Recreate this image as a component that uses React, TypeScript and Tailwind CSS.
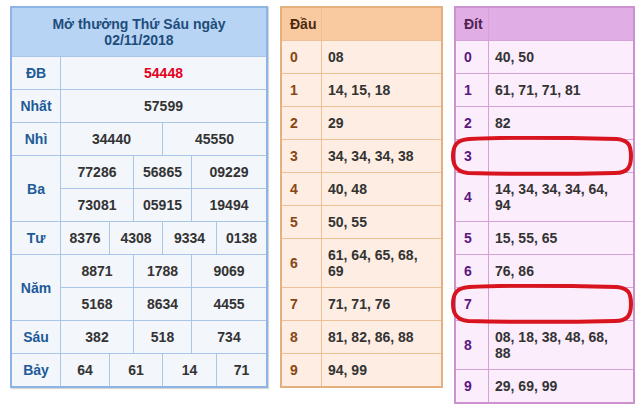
import React from 'react';

const font = { fontFamily: '"Liberation Sans", Arial, sans-serif' };

const dau: [string, string][] = [
  ['0', '08'],
  ['1', '14, 15, 18'],
  ['2', '29'],
  ['3', '34, 34, 34, 38'],
  ['4', '40, 48'],
  ['5', '50, 55'],
  ['6', '61, 64, 65, 68, 69'],
  ['7', '71, 71, 76'],
  ['8', '81, 82, 86, 88'],
  ['9', '94, 99'],
];

const dit: [string, string][] = [
  ['0', '40, 50'],
  ['1', '61, 71, 71, 81'],
  ['2', '82'],
  ['3', ''],
  ['4', '14, 34, 34, 34, 64, 94'],
  ['5', '15, 55, 65'],
  ['6', '76, 86'],
  ['7', ''],
  ['8', '08, 18, 38, 48, 68, 88'],
  ['9', '29, 69, 99'],
];

const Label: React.FC<{ children: React.ReactNode; className?: string }> = ({ children, className = '' }) => (
  <div className={`bg-[#f3f6fb] flex items-center justify-center text-[#1d5a98] ${className}`}>{children}</div>
);

const Num: React.FC<{ children: React.ReactNode; className?: string }> = ({ children, className = '' }) => (
  <div className={`bg-[#f3f6fb] h-8 flex items-center justify-center text-[#333] ${className}`}>{children}</div>
);

const ResultTable: React.FC = () => (
  <div className="border-2 border-[#8db4e2] shadow-[1px_1px_1px_rgba(0,0,0,0.15)]">
    <div className="grid grid-cols-[48px_48px_23px_28px_28px_24px_49px] gap-px bg-[#a9c6e8] text-[14px] font-bold leading-4">
      <div className="col-span-7 h-12 bg-[#b7d4f4] flex flex-col items-center justify-center text-[#1e4d7b]">
        <span>Mở thưởng Thứ Sáu ngày</span>
        <span>02/11/2018</span>
      </div>

      <Label>ĐB</Label>
      <Num className="col-span-6 text-[#e3001b]">54448</Num>

      <Label>Nhất</Label>
      <Num className="col-span-6">57599</Num>

      <Label>Nhì</Label>
      <Num className="col-span-3">34440</Num>
      <Num className="col-span-3">45550</Num>

      <Label className="row-span-2">Ba</Label>
      <Num className="col-span-2">77286</Num>
      <Num className="col-span-2">56865</Num>
      <Num className="col-span-2">09229</Num>
      <Num className="col-span-2">73081</Num>
      <Num className="col-span-2">05915</Num>
      <Num className="col-span-2">19494</Num>

      <Label>Tư</Label>
      <Num>8376</Num>
      <Num className="col-span-2">4308</Num>
      <Num className="col-span-2">9334</Num>
      <Num>0138</Num>

      <Label className="row-span-2">Năm</Label>
      <Num className="col-span-2">8871</Num>
      <Num className="col-span-2">1788</Num>
      <Num className="col-span-2">9069</Num>
      <Num className="col-span-2">5168</Num>
      <Num className="col-span-2">8634</Num>
      <Num className="col-span-2">4455</Num>

      <Label>Sáu</Label>
      <Num className="col-span-2">382</Num>
      <Num className="col-span-2">518</Num>
      <Num className="col-span-2">734</Num>

      <Label>Bảy</Label>
      <Num>64</Num>
      <Num className="col-span-2">61</Num>
      <Num className="col-span-2">14</Num>
      <Num>71</Num>
    </div>
  </div>
);

type Theme = {
  outer: string;
  line: string;
  head: string;
  headText: string;
  cell: string;
  label: string;
  cols: string;
};

const LotoTable: React.FC<{ title: string; rows: [string, string][]; t: Theme }> = ({ title, rows, t }) => (
  <div className={`border-2 ${t.outer}`}>
    <div className={`grid ${t.cols} gap-px ${t.line} text-[14px] font-bold leading-4`}>
      <div className={`${t.head} ${t.headText} h-8 flex items-center pl-2`}>{title}</div>
      <div className={t.head} />
      {rows.map(([k, v]) => (
        <React.Fragment key={k}>
          <div className={`${t.cell} ${t.label} flex items-center pl-2 min-h-8`}>{k}</div>
          <div className={`${t.cell} text-[#333] flex items-center pl-[6px] pr-3 py-2 min-h-8`}>{v}</div>
        </React.Fragment>
      ))}
    </div>
  </div>
);

const dauTheme: Theme = {
  outer: 'border-[#e6b07e]',
  line: 'bg-[#eec095]',
  head: 'bg-[#f9c9a0]',
  headText: 'text-[#4a2a10]',
  cell: 'bg-[#fdede2]',
  label: 'text-[#8a4612]',
  cols: 'grid-cols-[39px_119px]',
};

const ditTheme: Theme = {
  outer: 'border-[#cb92cf]',
  line: 'bg-[#d3a3d6]',
  head: 'bg-[#e1ade5]',
  headText: 'text-[#4f2250]',
  cell: 'bg-[#fcedfc]',
  label: 'text-[#5a1980]',
  cols: 'grid-cols-[32px_144px]',
};

const Circle: React.FC<{ className: string }> = ({ className }) => (
  <svg className={`absolute ${className}`} width="182" height="40" viewBox="0 0 182 40">
    <path
      d="M18 3 C60 1, 130 2, 166 3 C178 4, 180 10, 180 20 C180 31, 177 37, 164 37 C120 38, 60 38, 17 37 C6 36, 2 30, 2 20 C2 9, 6 4, 18 3 Z"
      fill="none"
      stroke="#d8141e"
      strokeWidth="4"
    />
  </svg>
);

export default function App() {
  return (
    <div className="relative w-[640px] h-[410px] bg-white overflow-hidden" style={font}>
      <div className="flex items-start pl-[10px] pt-[6px]">
        <ResultTable />
        <div className="ml-[12px]">
          <LotoTable title="Đầu" rows={dau} t={dauTheme} />
        </div>
        <div className="ml-[11px]">
          <LotoTable title="Đít" rows={dit} t={ditTheme} />
        </div>
      </div>
      <Circle className="left-[451px] top-[136px]" />
      <Circle className="left-[451px] top-[284px]" />
    </div>
  );
}
